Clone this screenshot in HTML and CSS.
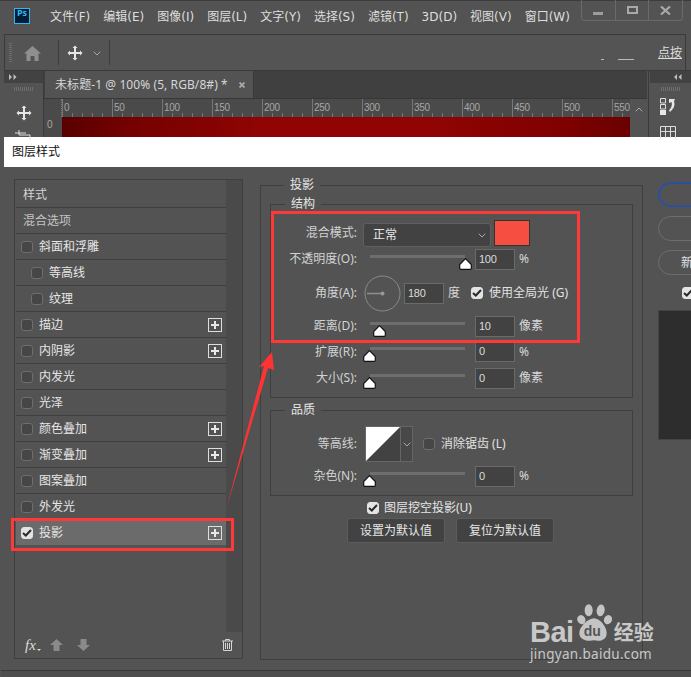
FILE: index.html
```html
<!DOCTYPE html>
<html lang="zh">
<head>
<meta charset="utf-8">
<title>图层样式</title>
<link rel="stylesheet" href="styles.css">
</head>
<body>
<svg class="defs" width="0" height="0">
  <symbol id="thumb" viewBox="0 0 13 12"><path d="M6.500.7 12.300 6.500V10.200Q12.300 11.300 11.200 11.300H1.800Q.7 11.300.7 10.200V6.500Z" fill="#fff" stroke="#111" stroke-width="1.200"/></symbol>
  <symbol id="move" viewBox="0 0 16 16"><path d="M8 .5 10.500 3H9V7H13V5.500L15.500 8 13 10.500V9H9V13H10.500L8 15.500 5.500 13H7V9H3V10.500L.5 8 3 5.500V7H7V3H5.500Z" fill="#e6e6e6"/></symbol>
  <symbol id="chev" viewBox="0 0 8 5"><path d="M.7.7 4 4 7.300.7" fill="none" stroke="#a8a8a8" stroke-width="1"/></symbol>
</svg>
<div class="app">
  <header class="menubar">
    <svg class="ps" width="16" height="16" viewBox="0 0 16 16"><rect x=".5" y=".5" width="15" height="15" fill="#001e36" stroke="#2fb8f0"/></svg>
    <span class="ps-label">Ps</span>
    <nav class="menu">
      <span>文件(F)</span><span>编辑(E)</span><span>图像(I)</span><span>图层(L)</span><span>文字(Y)</span><span>选择(S)</span><span>滤镜(T)</span><span>3D(D)</span><span>视图(V)</span><span>窗口(W)</span>
    </nav>
    <div class="winbtns">
      <div class="winbtn"><i class="w-min"></i></div>
      <div class="winbtn"><i class="w-max"></i></div>
      <div class="winbtn"><svg width="11" height="9" viewBox="0 0 11 9"><path d="M1 .5 10 8.500M10 .5 1 8.500" stroke="#a9a9a9" stroke-width="2.200"/></svg></div>
    </div>
  </header>

  <section class="options">
    <i class="grip-v"></i>
    <svg class="home" width="17" height="15" viewBox="0 0 17 15"><path d="M8.500 0 17 7.500H14.500V15H10.500V10H6.500V15H2.500V7.500H0Z" fill="#8f8f8f"/></svg>
    <i class="sep s1"></i>
    <svg class="opt-move" width="16" height="16"><use href="#move"/></svg>
    <svg class="opt-chev" width="8" height="5"><use href="#chev"/></svg>
    <i class="sep s2"></i>
    <div class="opt-space"></div>
    <i class="tick-a"></i><i class="tick-b"></i>
    <span class="clicktext">点按</span>
  </section>

  <section class="work">
    <aside class="toolpanel">
      <div class="panelhead">
        <svg width="8" height="6" viewBox="0 0 8 6"><path d="M0 0 3 3 0 6ZM4.500 0 7.500 3 4.500 6Z" fill="#bdbdbd"/></svg>
      </div>
      <i class="grip-h"></i>
      <svg class="tool-move" width="16" height="16"><use href="#move"/></svg>
      <svg class="tool-crop" width="16" height="10" viewBox="0 0 16 10"><path d="M4 0V5H15V10M0 3H11" fill="none" stroke="#e0e0e0"/></svg>
    </aside>
    <div class="doc">
      <div class="tabbar">
        <div class="tab">
          <span>未标题-1 @ 100% (5, RGB/8#) *</span>
          <svg width="6" height="6" viewBox="0 0 6 6"><path d="M.5.5 5.500 5.500M5.500.5.500 5.500" stroke="#a8a8a8" stroke-width="1.800"/></svg>
        </div>
      </div>
      <div class="ruler">
        <div class="corner"></div>
        <div class="scale">
          <span>0</span><span>50</span><span>100</span><span>150</span><span>200</span><span>250</span><span>300</span><span>350</span><span>400</span><span>450</span><span>500</span><span>550</span>
        </div>
        <div class="ruler-end"><svg width="8" height="5" class="upchev"><use href="#chev"/></svg></div>
      </div>
      <div class="canvasrow">
        <div class="vruler"><span>0</span></div>
        <div class="canvas"></div>
        <div class="vscroll"></div>
      </div>
    </div>
    <aside class="sidepanel">
      <div class="panelhead end">
        <svg width="8" height="6" viewBox="0 0 8 6"><path d="M3 0 0 3 3 6ZM7.500 0 4.500 3 7.500 6Z" fill="#bdbdbd"/></svg>
      </div>
      <i class="grip-h"></i>
      <svg class="side-hist" width="16" height="17" viewBox="0 0 16 17"><path d="M.5.500H5.500V5H.5ZM.5 6.500H5.500V11H.5Z" fill="none" stroke="#e0e0e0"/><path d="M0 12H6V17H0Z" fill="#e6e6e6"/><path d="M9 1H15L14 3Q16 9 10 14L9 12.500Q13 8 11.500 4L9 5Z" fill="#e6e6e6"/></svg>
      <svg class="side-grid" width="16" height="12" viewBox="0 0 16 12"><path d="M.5 12V.5H15.500V12M5.500 0V12M10.500 0V12M0 5.500H16" fill="none" stroke="#dcdcdc"/></svg>
    </aside>
  </section>

  <section class="dialog">
    <div class="dtitle">图层样式</div>
    <div class="dbody">
      <div class="stylecol">
        <div class="stylemain">
          <ul class="stylelist">
            <li class="plain">样式</li>
            <li class="plain dim">混合选项</li>
            <li><i class="cb"></i>斜面和浮雕</li>
            <li class="sub"><i class="cb"></i>等高线</li>
            <li class="sub"><i class="cb"></i>纹理</li>
            <li><i class="cb"></i>描边<b class="plus"></b></li>
            <li><i class="cb"></i>内阴影<b class="plus"></b></li>
            <li><i class="cb"></i>内发光</li>
            <li><i class="cb"></i>光泽</li>
            <li><i class="cb"></i>颜色叠加<b class="plus"></b></li>
            <li><i class="cb"></i>渐变叠加<b class="plus"></b></li>
            <li><i class="cb"></i>图案叠加</li>
            <li><i class="cb"></i>外发光</li>
            <li class="sel"><i class="cb on"><svg width="10" height="8" viewBox="0 0 10 8"><path d="M1 4 3.800 6.500 9 1" fill="none" stroke="#2a2a2a" stroke-width="2"/></svg></i>投影<b class="plus"></b></li>
          </ul>
          <div class="stylescroll"></div>
        </div>
        <footer class="stylefoot">
          <span class="fx">fx</span><i class="fxdot"></i>
          <svg class="arr a1" width="13" height="12" viewBox="0 0 13 12"><path d="M6.500 0 13 6H9.500V12H3.500V6H0Z" fill="#8a8a8a"/></svg>
          <svg class="arr a2" width="13" height="12" viewBox="0 0 13 12"><path d="M6.500 12 13 6H9.500V0H3.500V6H0Z" fill="#8a8a8a"/></svg>
          <svg class="trash" width="11" height="12" viewBox="0 0 11 12"><path d="M0 2H11M3.500 2V.5H7.500V2M1.500 2V11.500H9.500V2M3.500 4V10M5.500 4V10M7.500 4V10" fill="none" stroke="#d4d4d4"/></svg>
        </footer>
      </div>

      <fieldset class="outer">
        <legend>投影</legend>
        <fieldset class="inner struct">
          <legend>结构</legend>
          <div class="row r26">
            <label>混合模式:</label>
            <div class="select"><span>正常</span><svg width="8" height="5"><use href="#chev"/></svg></div>
            <div class="swatch"></div>
          </div>
          <div class="row r26">
            <label>不透明度(O):</label>
            <div class="slider"><svg class="thumb t-full" width="13" height="12"><use href="#thumb"/></svg></div>
            <div class="num">100</div><span class="unit">%</span>
          </div>
          <div class="row r42">
            <label>角度(A):</label>
            <svg class="dial" width="37" height="37" viewBox="0 0 37 37"><circle cx="18.500" cy="18.500" r="17.500" fill="none" stroke="#8a8a8a"/><path d="M3 18.500H18" stroke="#8f8f8f" stroke-width="1.500"/><circle cx="18.500" cy="18.500" r="2" fill="#999"/></svg>
            <div class="num n-angle">180</div><span class="unit">度</span>
            <i class="cb on c-global"><svg width="10" height="8" viewBox="0 0 10 8"><path d="M1 4 3.800 6.500 9 1" fill="none" stroke="#2a2a2a" stroke-width="2"/></svg></i>
            <span class="cbtext">使用全局光 (G)</span>
          </div>
          <div class="row r24">
            <label>距离(D):</label>
            <div class="slider"><svg class="thumb t-10" width="13" height="12"><use href="#thumb"/></svg></div>
            <div class="num">10</div><span class="unit">像素</span>
          </div>
          <div class="row r27">
            <label>扩展(R):</label>
            <div class="slider"><svg class="thumb t-0" width="13" height="12"><use href="#thumb"/></svg></div>
            <div class="num">0</div><span class="unit">%</span>
          </div>
          <div class="row r26">
            <label>大小(S):</label>
            <div class="slider"><svg class="thumb t-0" width="13" height="12"><use href="#thumb"/></svg></div>
            <div class="num">0</div><span class="unit">像素</span>
          </div>
        </fieldset>

        <fieldset class="inner quality">
          <legend>品质</legend>
          <div class="row r36">
            <label>等高线:</label>
            <div class="curve">
              <svg width="34" height="34" viewBox="0 0 34 34"><rect width="34" height="34" fill="#424242"/><path d="M0 34V0H34Z" fill="#fff"/></svg>
              <div class="curve-drop"><svg width="8" height="5"><use href="#chev"/></svg></div>
            </div>
            <i class="cb c-aa"></i>
            <span class="cbtext">消除锯齿 (L)</span>
          </div>
          <div class="row r28">
            <label>杂色(N):</label>
            <div class="slider"><svg class="thumb t-0" width="13" height="12"><use href="#thumb"/></svg></div>
            <div class="num">0</div><span class="unit">%</span>
          </div>
        </fieldset>

        <div class="knock">
          <i class="cb on"><svg width="10" height="8" viewBox="0 0 10 8"><path d="M1 4 3.800 6.500 9 1" fill="none" stroke="#2a2a2a" stroke-width="2"/></svg></i>
          <span>图层挖空投影(U)</span>
        </div>
        <div class="defaults">
          <button>设置为默认值</button>
          <button>复位为默认值</button>
        </div>
      </fieldset>

      <div class="actions">
        <div class="pill primary"></div>
        <div class="pill"></div>
        <div class="pill"><span>新</span></div>
        <div class="preview-check"><i class="cb on"><svg width="10" height="8" viewBox="0 0 10 8"><path d="M1 4 3.800 6.500 9 1" fill="none" stroke="#2a2a2a" stroke-width="2"/></svg></i></div>
        <div class="preview"></div>
      </div>
    </div>
  </section>
  <div class="bottomstrip"></div>

  <div class="mark m-row"></div>
  <div class="mark m-form"></div>
  <svg class="arrow" width="60" height="170" viewBox="0 0 60 170"><path d="M3 160 41 16 36 17 49 2 51 20 45 18Z" fill="#ff3333"/></svg>

  <div class="wm">
    <div class="wm-top">
      <span class="wm-bai">Bai</span>
      <div class="wm-paw">
        <svg width="36" height="40" viewBox="0 0 54 58"><g fill="#c4c4c4"><ellipse cx="8" cy="24" rx="6" ry="7" transform="rotate(-25 8 24)"/><ellipse cx="19" cy="10" rx="6" ry="9"/><ellipse cx="37" cy="10" rx="6" ry="9" transform="rotate(10 37 10)"/><ellipse cx="48" cy="24" rx="6" ry="7" transform="rotate(25 48 24)"/><path d="M27 22C36 22 46 35 46 44 46 55 36 57 27 55 18 57 5 55 5 44 5 35 18 22 27 22Z"/></g></svg>
        <span class="wm-du">du</span>
      </div>
      <span class="wm-jy">经验</span>
    </div>
    <div class="wm-url">jingyan.baidu.com</div>
  </div>
</div>
</body>
</html>
```

FILE: styles.css
```css
* { box-sizing: border-box; }
html, body { margin: 0; padding: 0; }
body {
  width: 691px; height: 677px; overflow: hidden; background: #535353;
  font: 12px/16px "Noto Sans", "Noto Sans CJK SC", sans-serif; color: #e2e2e2;
}
i { display: block; font-style: normal; }
.defs { position: absolute; }
.app { position: relative; width: 691px; height: 677px; overflow: hidden; background: #535353; }

/* menu */
.menubar { height: 34px; display: flex; align-items: center; position: relative; border-top: 1px solid #3c3c3c; }
.ps { margin-left: 14px; margin-top: -4px; flex: none; }
.ps-label { position: absolute; left: 17px; top: 6px; font-size: 9px; line-height: 12px; color: #31b9f2; font-weight: 700; }
.menu { display: flex; gap: 13px; margin-left: 20px; margin-top: -2px; color: #dedede; white-space: nowrap; font-family: "DejaVu Sans", "Noto Sans CJK SC", sans-serif; }
.winbtns { position: absolute; right: 8px; top: -1px; width: 102px; height: 21px; display: flex; border: 1px solid #6a6a6a; border-top: 0; border-radius: 0 0 4px 4px; }
.winbtn { flex: 1; display: flex; align-items: center; justify-content: center; border-left: 1px solid #6a6a6a; }
.winbtn:first-child { border-left: 0; }
.w-min { width: 10px; height: 3px; background: #9d9d9d; margin-top: 6px; }
.w-max { width: 11px; height: 8px; border: 2px solid #a9a9a9; }

/* options */
.options { height: 36px; margin: 0 5px 0 4px; border-top: 1px solid #3a3a3a; border-left: 1px solid #3a3a3a; border-right: 1px solid #3a3a3a; position: relative; display: flex; align-items: center; background: #545454; }
.grip-v { width: 3px; height: 19px; margin-left: 4px; background: repeating-linear-gradient(#6c6c6c 0 1px, transparent 1px 2px); }
.home { margin-left: 12px; margin-top: 2px; }
.sep { width: 1px; height: 25px; background: #3c3c3c; }
.s1 { margin-left: 17px; }
.opt-move { margin-left: 8px; }
.opt-chev { margin-left: 10px; margin-top: 2px; }
.s2 { margin-left: 8px; }
.opt-space { flex: 1; }
.tick-a { position: absolute; left: 596px; top: 24px; width: 3px; height: 1px; background: #bbb; }
.tick-b { position: absolute; left: 613px; top: 24px; width: 16px; height: 1px; background: #bbb; }
.clicktext { width: 27px; overflow: hidden; white-space: nowrap; margin-right: 0; text-decoration: underline; color: #ddd; }

/* work */
.work { height: 67px; display: flex; border-top: 1px solid #3a3a3a; margin-left: 4px; }
.toolpanel { width: 40px; flex: none; border-right: 1px solid #3a3a3a; display: flex; flex-direction: column; align-items: center; }
.panelhead { height: 12px; width: 100%; flex: none; background: #424242; display: flex; align-items: center; padding: 0 5px 0 5px; }
.panelhead.end { justify-content: flex-end; padding-right: 9px; }
.grip-h { width: 20px; height: 4px; margin-top: 4px; flex: none; background: repeating-linear-gradient(90deg, #6e6e6e 0 1px, transparent 1px 2px); }
.tool-move { margin-top: 14px; flex: none; }
.tool-crop { margin-top: 9px; flex: none; margin-left: -2px; }
.doc { width: 603px; flex: none; display: flex; flex-direction: column; background: #424242; }
.tabbar { height: 28px; flex: none; background: #404040; display: flex; border-bottom: 1px solid #373737; }
.tab { width: 209px; background: #535353; display: flex; align-items: center; padding-left: 10px; gap: 11px; white-space: nowrap; color: #d6d6d6; border-right: 1px solid #3a3a3a; margin-left: 1px; letter-spacing: .08px; }
.ruler { height: 18px; flex: none; display: flex; background: #4a4a4a; }
.corner { width: 18px; flex: none; background: #4a4a4a; border-right: 1px dotted #7a7a7a; }
.scale { width: 568px; flex: none; display: flex; overflow: hidden; background-image: repeating-linear-gradient(90deg, #777 0 1px, transparent 1px 10px); background-size: 100% 4px; background-position: 0 100%; background-repeat: no-repeat; }
.scale span { flex: 0 0 50px; border-left: 1px solid #777; padding-left: 1px; font: 10px/18px "Liberation Sans", sans-serif; letter-spacing: -.3px; color: #a6a6a6; }
.ruler-end { flex: 1; background: #535353; text-align: center; }
.upchev { transform: rotate(180deg); margin-top: 8px; }
.canvasrow { flex: 1; display: flex; min-height: 0; }
.vruler { width: 18px; flex: none; background: #4a4a4a; font: 10px/14px "Liberation Sans", sans-serif; padding: 1px 0 0 3px; color: #a6a6a6; }
.canvas { width: 568px; flex: none; background: linear-gradient(96deg, #590000 0%, #750000 12%, #900404 35%, #900404 65%, #800000 88%, #6a0000 100%); }
.vscroll { flex: 1; background: #535353; }
.sidepanel { flex: 1; margin-left: 1px; border-left: 1px solid #3a3a3a; display: flex; flex-direction: column; align-items: center; padding-left: 1px; }
.side-hist { margin-top: 7px; flex: none; margin-left: -5px; }
.side-grid { margin-top: 11px; flex: none; margin-left: -5px; }

/* dialog */
.dialog { height: 533px; margin-left: 4px; }
.dtitle { height: 30px; background: #fff; color: #111; padding-left: 8px; line-height: 30px; }
.dbody { height: 503px; display: flex; align-items: flex-start; overflow: hidden; background: #535353; }
.stylecol { width: 229px; height: 480px; margin: 12px 0 0 10px; flex: none; border: 1px solid #3f3f3f; display: flex; flex-direction: column; }
.stylemain { height: 452px; display: flex; }
.stylelist { list-style: none; margin: 0; padding: 2px 0 0 1px; width: 211px; flex: none; }
.stylelist li { height: 26px; display: flex; align-items: center; padding-left: 5px; border-bottom: 1px solid #3f3f3f; color: #e6e6e6; }
.stylelist li.plain { padding-left: 7px; color: #d4d4d4; }
.stylelist li.dim { color: #c4c4c4; }
.stylelist li.sub { padding-left: 15px; }
.stylelist li.sel { background: #6b6b6b; border-bottom: 0; height: 25px; }
.cb { width: 12px; height: 12px; flex: none; border-radius: 3px; border: 1px solid #6e6e6e; background: #464646; margin-right: 6px; }
.cb.on { background: #e4e4e4; border-color: #e4e4e4; display: flex; align-items: center; justify-content: center; }
.plus { margin-left: auto; margin-right: 4px; width: 14px; height: 14px; border: 1px solid #dedede; background:
  linear-gradient(#e8e8e8,#e8e8e8) center/8px 2px no-repeat,
  linear-gradient(#e8e8e8,#e8e8e8) center/2px 8px no-repeat; }
.stylescroll { flex: 1; background: #4a4a4a; }
.stylefoot { flex: 1; display: flex; align-items: center; padding-left: 10px; }
.fx { font: italic 15px/16px "Liberation Serif", serif; color: #dcdcdc; width: 12px; }
.fxdot { width: 0; height: 0; border: 2px solid transparent; border-top: 2px solid #ddd; margin: 12px 0 0 0; }
.a1 { margin-left: 9px; }
.a2 { margin-left: 14px; }
.trash { margin-left: auto; margin-right: 9px; }

.outer { width: 383px; height: 483px; margin: 10px 0 0 17px; padding: 0 9px; flex: none; border: 1px solid #3f3f3f; min-width: 0; }
legend { padding: 0 6px; line-height: 16px; margin-left: 14px; color: #e6e6e6; }
.inner { margin: 3px 0 0; padding: 8px 0 0; width: 363px; border: 1px solid #3f3f3f; min-width: 0; }
.struct { height: 202px; }
.quality { margin-top: 4px; height: 94px; padding-top: 8px; }
.row { display: flex; align-items: center; white-space: nowrap; }
.r24 { height: 24px; } .r26 { height: 26px; } .r27 { height: 27px; } .r28 { height: 28px; } .r36 { height: 36px; } .r42 { height: 42px; }
.row label { width: 86px; flex: none; text-align: right; margin-right: 6px; color: #d2d2d2; }
.select { width: 128px; height: 24px; margin-top: 4px; border: 1px solid #5f5f5f; border-radius: 3px; background: #424242; display: flex; align-items: center; justify-content: space-between; padding: 0 4px 0 9px; color: #e6e6e6; }
.swatch { width: 36px; height: 26px; margin-left: 3px; background: #f64f42; border: 1px solid #333; }
.slider { position: relative; width: 95px; height: 3px; margin: -6px 10px 0 7px; background: #6e6e6e; flex: none; }
.thumb { position: absolute; top: 3px; }
.t-full { left: 89px; } .t-10 { left: 3px; } .t-0 { left: -7px; }
.num { width: 40px; height: 21px; flex: none; background: #424242; border: 1px solid #6a6a6a; font: 11px/19px "Liberation Sans", sans-serif; letter-spacing: -.3px; padding-left: 3px; color: #dcdcdc; }
.unit { margin-left: 4px; color: #d8d8d8; }
.dial { margin-left: 1px; flex: none; }
.n-angle { margin-left: 3px; }
.c-global { margin: 0 6px 0 11px; }
.c-aa { margin: 0 6px 0 10px; }
.cbtext { color: #e2e2e2; }
.curve { margin-left: 2px; height: 36px; display: flex; border: 1px solid #666; }
.curve-drop { width: 12px; border-left: 1px solid #666; display: flex; align-items: center; justify-content: center; background: #484848; }
.knock { display: flex; align-items: center; height: 16px; margin: 4px 0 0 97px; color: #e6e6e6; }
.knock .cb { margin-right: 5px; }
.defaults { display: flex; gap: 11px; margin: 2px 0 0 77px; }
.defaults button { width: 98px; height: 25px; background: #424242; border: 1px solid #5c5c5c; border-radius: 3px; color: #e6e6e6; font: inherit; padding: 0; }

.actions { width: 90px; flex: none; margin: 15px 0 0 15px; display: flex; flex-direction: column; }
.pill { height: 25px; border: 1px solid #6e6e6e; border-radius: 13px; margin-bottom: 9px; padding-left: 22px; line-height: 23px; }
.pill.primary { border: 2px solid #2c4f9f; }
.preview-check { height: 12px; margin: 3px 0 11px 24px; }
.preview { height: 130px; background: #2d2d2d; border: 1px solid #444; }
.bottomstrip { height: 7px; border-top: 1px solid #383838; margin-left: 1px; background: #4e4e4e; }

/* annotations */
.mark { position: absolute; border: 3px solid #ff3838; }
.m-row { left: 11px; top: 518px; width: 223px; height: 33px; }
.m-form { left: 271px; top: 211px; width: 309px; height: 132px; }
.arrow { position: absolute; left: 223px; top: 350px; }

/* watermark */
.wm { position: absolute; left: 530px; top: 603px; width: 125px; color: #c8c8c8; }
.wm-top { display: flex; height: 44px; }
.wm-bai { font: 700 29px/24px "Liberation Sans", sans-serif; letter-spacing: -.5px; margin-top: 17px; }
.wm-paw { position: relative; width: 36px; flex: none; margin-left: 2px; }
.wm-paw svg { display: block; }
.wm-du { position: absolute; left: 8px; top: 20px; font: 700 14px/16px "Liberation Sans", sans-serif; color: #555; }
.wm-jy { font: 700 20px/24px "Noto Sans CJK SC", sans-serif; white-space: nowrap; margin: 17px 0 0 2px; height: 24px; }
.wm-url { font: 13.500px/14px "Noto Sans", sans-serif; letter-spacing: .3px; white-space: nowrap; }
```
